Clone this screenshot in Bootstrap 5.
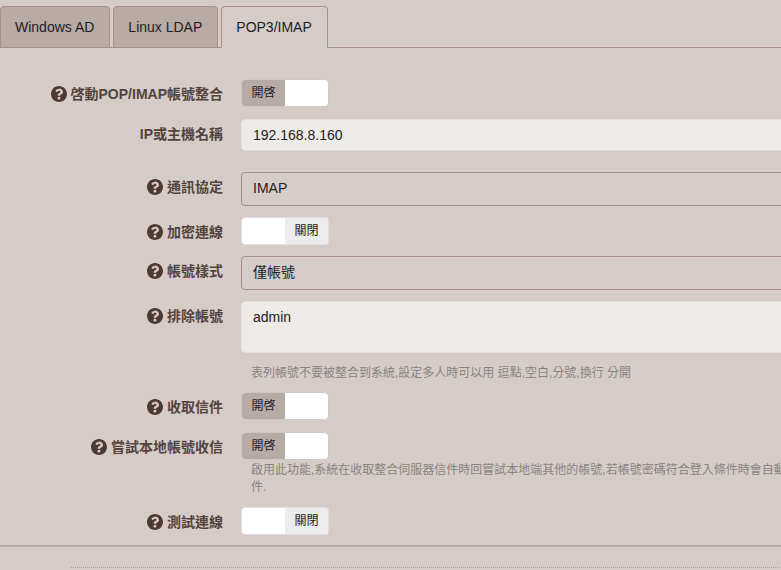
<!DOCTYPE html>
<html lang="zh-Hant">
<head>
<meta charset="utf-8">
<title>POP3/IMAP</title>
<link rel="stylesheet" href="https://cdn.jsdelivr.net/npm/bootstrap@5.3.0/dist/css/bootstrap.min.css">
<style>
html,body{height:100%;overflow:hidden}
body{background:#d5ccc8;font-family:"Liberation Sans","Noto Sans CJK TC",sans-serif;color:#222;font-size:14px}
.page-wrap{width:1000px;padding-top:6px}
.tabs-bar{border-bottom:1px solid #a58f87;gap:3px;height:42px;flex-wrap:nowrap}
.tabs-bar .nav-link{height:42px;padding:0 15px 0 14px;line-height:41px;font-size:14px;color:#222;background:#b8aaa5;border:1px solid #a58f87;border-bottom-color:#a58f87;border-radius:4px 4px 0 0;margin:0}
.tabs-bar .nav-link.active{background:#d5ccc8;color:#222;border-color:#a58f87 #a58f87 #d5ccc8;height:42px}
.form-body{padding-top:31px}
.field-row{display:flex;align-items:flex-start}
.field-label{width:223px;flex:none;margin-right:18px;display:flex;justify-content:flex-end;align-items:center;gap:4px;font-size:14px;font-weight:700;color:#54433c;line-height:16px;padding-top:7px}
.field-main{flex:1;min-width:0}
.qicon{width:16px;height:16px;fill:#4e3a32;flex:none}
.toggle-box{display:inline-flex;width:88px;height:28px;border-radius:4px;overflow:hidden;background:#fff;font-size:12px;color:#222;border:1px solid #e2dedc;vertical-align:top}
.toggle-box>span{width:43px;flex:none;display:flex;align-items:center;justify-content:center}
.toggle-on .tg-state{background:#b8aaa5}
.toggle-off .tg-state{background:#ececec}
.toggle-on{border-color:#cfc7c3}
.field-text.form-control{background:#eeeae8;border:1px solid #e4dfdc;border-radius:4px;color:#222;font-size:14px;padding:0 11px;height:32px;box-shadow:none;font-family:inherit}
.field-area.form-control{height:52px;padding:5px 11px;resize:none}
.field-select.form-select{background-color:#d5ccc8;border:1px solid #a58f87;border-radius:4px;color:#222;font-size:14px;padding:0 11px 2px;height:34px;font-family:inherit}
.help-note{font-size:12px;line-height:17.14px;color:#8a8380;padding-left:10px;white-space:nowrap}
.note-first{margin-top:12px}
.note-second{margin-top:2px}
.gap-a{margin-top:12px}.gap-b{margin-top:21px}.gap-c{margin-top:11px}.gap-d{margin-top:10px}
.rule-solid{border:0;border-top:2px solid #bcaea7;opacity:1;margin:10px 0 0}
.rule-dots{border-top:1px dotted #a9a09b;margin:20px 0 0 71px;height:0}
</style>
</head>
<body>
<svg class="d-none"><symbol id="q" viewBox="8 8 496 496"><path d="M504 256c0 136.997-111.043 248-248 248S8 392.997 8 256C8 119.083 119.043 8 256 8s248 111.083 248 248zM262.655 90c-54.497 0-89.255 22.957-116.549 63.758-3.536 5.286-2.353 12.415 2.715 16.258l34.699 26.31c5.205 3.947 12.621 3.008 16.665-2.122 17.864-22.658 30.113-35.797 57.303-35.797 20.429 0 45.698 13.148 45.698 32.958 0 14.976-12.363 22.667-32.534 33.976C247.128 238.528 216 254.941 216 296v4c0 6.627 5.373 12 12 12h56c6.627 0 12-5.373 12-12v-1.333c0-28.462 83.186-29.647 83.186-106.667 0-58.002-60.165-106-116.531-106zM256 338c-25.365 0-46 20.635-46 46 0 25.364 20.635 46 46 46s46-20.636 46-46c0-25.365-20.635-46-46-46z"/></symbol></svg>
<div class="page-wrap">
  <ul class="nav nav-tabs tabs-bar">
    <li class="nav-item"><a class="nav-link" href="#">Windows AD</a></li>
    <li class="nav-item"><a class="nav-link" href="#">Linux LDAP</a></li>
    <li class="nav-item"><a class="nav-link active" href="#">POP3/IMAP</a></li>
  </ul>
  <form class="form-body">
    <div class="field-row">
      <div class="field-label"><svg class="qicon"><use href="#q"/></svg>啓動POP/IMAP帳號整合</div>
      <div class="field-main"><div class="toggle-box toggle-on"><span class="tg-state">開啓</span><span></span></div></div>
    </div>
    <div class="field-row gap-a">
      <div class="field-label">IP或主機名稱</div>
      <div class="field-main"><input class="form-control field-text" value="192.168.8.160"></div>
    </div>
    <div class="field-row gap-b">
      <div class="field-label"><svg class="qicon"><use href="#q"/></svg>通訊協定</div>
      <div class="field-main"><select class="form-select field-select"><option>IMAP</option></select></div>
    </div>
    <div class="field-row gap-c">
      <div class="field-label"><svg class="qicon"><use href="#q"/></svg>加密連線</div>
      <div class="field-main"><div class="toggle-box toggle-off"><span></span><span class="tg-state">關閉</span></div></div>
    </div>
    <div class="field-row gap-c">
      <div class="field-label"><svg class="qicon"><use href="#q"/></svg>帳號樣式</div>
      <div class="field-main"><select class="form-select field-select"><option>僅帳號</option></select></div>
    </div>
    <div class="field-row gap-c">
      <div class="field-label"><svg class="qicon"><use href="#q"/></svg>排除帳號</div>
      <div class="field-main">
        <textarea class="form-control field-text field-area">admin</textarea>
        <div class="help-note note-first">表列帳號不要被整合到系統,設定多人時可以用 逗點,空白,分號,換行 分開</div>
      </div>
    </div>
    <div class="field-row gap-d">
      <div class="field-label"><svg class="qicon"><use href="#q"/></svg>收取信件</div>
      <div class="field-main"><div class="toggle-box toggle-on"><span class="tg-state">開啓</span><span></span></div></div>
    </div>
    <div class="field-row gap-a">
      <div class="field-label"><svg class="qicon"><use href="#q"/></svg>嘗試本地帳號收信</div>
      <div class="field-main">
        <div class="toggle-box toggle-on"><span class="tg-state">開啓</span><span></span></div>
        <div class="help-note note-second">啟用此功能,系統在收取整合伺服器信件時回嘗試本地端其他的帳號,若帳號密碼符合登入條件時會自動收取信<br>件.</div>
      </div>
    </div>
    <div class="field-row gap-c">
      <div class="field-label"><svg class="qicon"><use href="#q"/></svg>測試連線</div>
      <div class="field-main"><div class="toggle-box toggle-off"><span></span><span class="tg-state">關閉</span></div></div>
    </div>
    <hr class="rule-solid">
    <div class="rule-dots"></div>
  </form>
</div>
</body>
</html>
